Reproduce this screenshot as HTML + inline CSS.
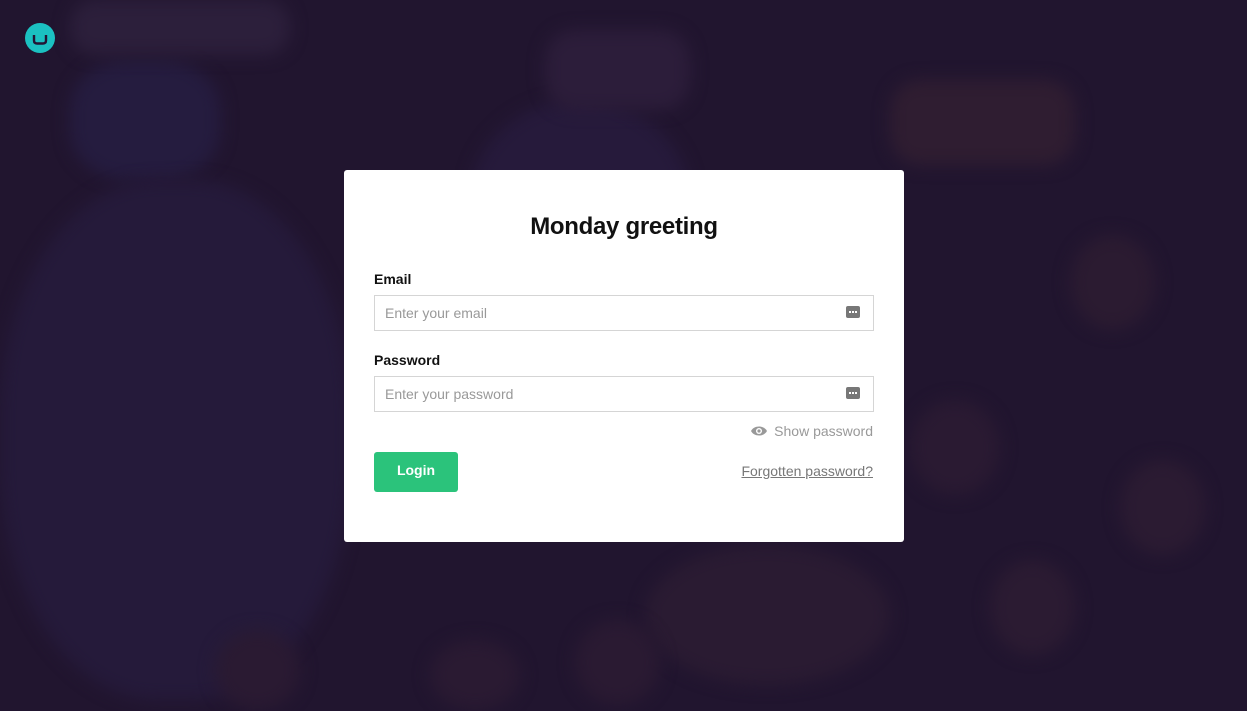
<!DOCTYPE html>
<html><head><meta charset="utf-8"><style>
html,body{margin:0;padding:0;width:1247px;height:711px;overflow:hidden;font-family:"Liberation Sans",sans-serif}
body{background:#21152f;position:relative}
.blob{position:absolute;border-radius:50%;filter:blur(8px)}
.card{position:absolute;left:344px;top:170px;width:560px;height:372px;background:#fff;border-radius:3px}
h1{position:absolute;left:0;right:0;top:43px;margin:0;text-align:center;font-size:24px;font-weight:bold;color:#111;letter-spacing:-0.3px}
.lbl{position:absolute;left:30px;font-size:14px;font-weight:bold;color:#111}
.inp{position:absolute;left:30px;width:498px;height:34px;border:1px solid #d5d5d5;font-size:14px;color:#999;line-height:34px;text-indent:10px}
.key{position:absolute;right:13px;top:10px;width:14px;height:12px;background:#777;border-radius:2px}
.key i{position:absolute;top:5px;width:2px;height:2px;background:#fff}
.show{position:absolute;right:31px;top:253px;font-size:14px;color:#999}
.btn{position:absolute;left:30px;top:282px;width:84px;height:40px;background:#2bc37b;color:#fff;font-size:14px;font-weight:bold;text-align:center;line-height:37px;border-radius:3px}
.fp{position:absolute;right:31px;top:293px;font-size:14px;color:#777;text-decoration:underline}
</style></head><body>
<div class="blob" style="left:70px;top:60px;width:150px;height:120px;background:#251c3f;border-radius:40%"></div>
<div class="blob" style="left:0;top:180px;width:350px;height:520px;background:#251a3a;border-radius:45%"></div>
<div class="blob" style="left:470px;top:100px;width:220px;height:200px;background:#261a3b"></div>
<div class="blob" style="left:545px;top:30px;width:145px;height:80px;background:#2c1d3a;border-radius:30px"></div>
<div class="blob" style="left:70px;top:0;width:220px;height:55px;background:#2c1f3b;border-radius:25px"></div>
<div class="blob" style="left:890px;top:80px;width:185px;height:85px;background:#2f1d31;border-radius:30px"></div>
<div class="blob" style="left:1070px;top:235px;width:85px;height:95px;background:#2b1b31"></div>
<div class="blob" style="left:910px;top:400px;width:90px;height:95px;background:#2a1a32"></div>
<div class="blob" style="left:1120px;top:460px;width:85px;height:95px;background:#2b1b32"></div>
<div class="blob" style="left:990px;top:560px;width:85px;height:95px;background:#2b1b32"></div>
<div class="blob" style="left:645px;top:545px;width:245px;height:140px;background:#2a1b32"></div>
<div class="blob" style="left:215px;top:630px;width:85px;height:80px;background:#2a1a32"></div>
<div class="blob" style="left:430px;top:640px;width:90px;height:70px;background:#2a1a32"></div>
<div class="blob" style="left:575px;top:620px;width:85px;height:85px;background:#2a1a32"></div>
<svg style="position:absolute;left:25px;top:23px" width="30" height="30" viewBox="0 0 30 30"><circle cx="15" cy="15" r="15" fill="#1bc1c1"/><path d="M9 12v5.5c0 2 1 3 3 3h6c2 0 3-1 3-3V12" fill="none" stroke="#231634" stroke-width="2.4"/></svg>
<div class="card">
<h1>Monday greeting</h1>
<div class="lbl" style="top:101px">Email</div>
<div class="inp" style="top:125px">Enter your email<div class="key"><i style="left:3px"></i><i style="left:6px"></i><i style="left:9px"></i></div></div>
<div class="lbl" style="top:182px">Password</div>
<div class="inp" style="top:206px">Enter your password<div class="key"><i style="left:3px"></i><i style="left:6px"></i><i style="left:9px"></i></div></div>
<div class="show"><svg width="18" height="12" viewBox="0 0 18 12" style="vertical-align:-1px;margin-right:6px"><path d="M1 6C4 0 14 0 17 6C14 12 4 12 1 6Z" fill="#999"/><circle cx="9" cy="6" r="3" fill="#fff"/><circle cx="9" cy="6" r="1.6" fill="#999"/></svg>Show password</div>
<div class="btn">Login</div>
<div class="fp">Forgotten password?</div>
</div>
</body></html>
